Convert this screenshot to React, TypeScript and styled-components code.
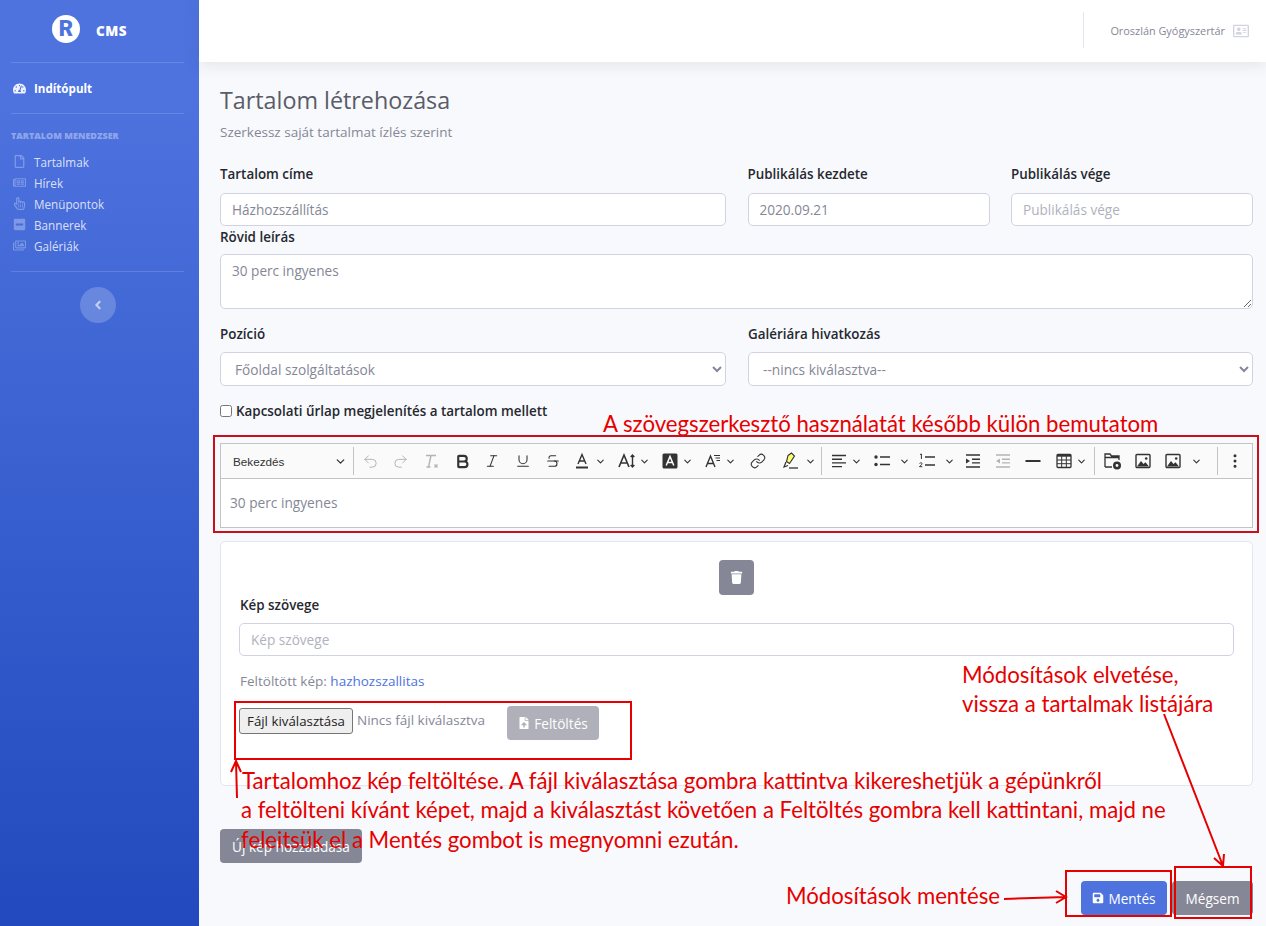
import styled, { createGlobalStyle } from "styled-components";
import type { ReactNode } from "react";
import {
  FaTachometerAlt, FaRegFile, FaRegNewspaper, FaRegHandPointer, FaMinusSquare, FaRegImages,
  FaAngleLeft, FaRegAddressCard, FaTrash, FaFileUpload, FaSave,
} from "react-icons/fa";
import {
  Undo2, Redo2, Bold, Italic, Underline, Strikethrough, Link, ChevronDown,
  MoreVertical,
} from "lucide-react";

const GlobalStyle = createGlobalStyle`
  html, body { margin: 0; padding: 0; height: 100%; overflow: hidden; }
  body { font-family: "Open Sans", "Noto Sans", sans-serif; color: #858796; background: #f8f9fc; }
  * { box-sizing: border-box; }
`;

const NAV = [
  { label: "Tartalmak", icon: <FaRegFile /> },
  { label: "Hírek", icon: <FaRegNewspaper /> },
  { label: "Menüpontok", icon: <FaRegHandPointer /> },
  { label: "Bannerek", icon: <FaMinusSquare /> },
  { label: "Galériák", icon: <FaRegImages /> },
];

const Svg = ({ children, faded }: { children: ReactNode; faded?: boolean }) => (
  <svg width="18" height="18" viewBox="0 0 18 18" fill="none" stroke={faded ? "#b4b4b4" : "#333"} strokeWidth="1.4">
    {children}
  </svg>
);

const ClearIcon = () => (
  <Svg faded>
    <path d="M4 3.5h10M9 3.5 6.5 15M4.5 15h4M12.5 12.5l3 3M15.5 12.5l-3 3" />
  </Svg>
);
const FontColorIcon = () => (
  <Svg>
    <path d="M5 12 9 2.5 13 12M6.4 9h5.2" />
    <path d="M3 15.5h12" strokeWidth="2" />
  </Svg>
);
const FontSizeIcon = () => (
  <Svg>
    <path d="M1 15 6 3l5 12M2.8 11h6.4" strokeWidth="1.6" />
    <path d="M14.5 3v12M12.7 5l1.8-2 1.8 2M12.7 13l1.8 2 1.8-2" />
  </Svg>
);
const BgColorIcon = () => (
  <svg width="18" height="18" viewBox="0 0 18 18">
    <rect x="1.5" y="1.5" width="15" height="15" rx="1.5" fill="#333" />
    <path d="M5.2 13.5 9 4.5l3.8 9M6.5 10.5h5" fill="none" stroke="#fff" strokeWidth="1.5" />
  </svg>
);
const FontFamilyIcon = () => (
  <Svg>
    <path d="M2 15 6.5 4 11 15M3.6 11.5h5.8" />
    <path d="M10 3.5h6M11.5 6h4.5M12.5 8.5h3.5" strokeWidth="1" />
  </Svg>
);
const MarkerIcon = () => (
  <svg width="20" height="18" viewBox="0 0 20 18">
    <path d="M8 3.5 11.5 1l3 3-5 7.5-3-2z" fill="#fdfd77" stroke="#333" strokeWidth="1.1" />
    <path d="M6 10 4 15l4-1.5" fill="none" stroke="#333" strokeWidth="1.2" />
    <path d="M9 16h9" stroke="#333" strokeWidth="1.3" />
  </svg>
);
const AlignIcon = () => (
  <Svg>
    <path d="M2 3.5h14M2 7.2h10M2 10.9h14M2 14.6h10" />
  </Svg>
);
const BulletIcon = () => (
  <svg width="18" height="18" viewBox="0 0 18 18">
    <circle cx="3" cy="5" r="1.7" fill="#333" />
    <circle cx="3" cy="12.5" r="1.7" fill="#333" />
    <path d="M7 5h10M7 12.5h10" stroke="#333" strokeWidth="1.5" />
  </svg>
);
const NumberedIcon = () => (
  <svg width="18" height="18" viewBox="0 0 18 18">
    <path d="M2 2.5 3.4 2v5M1.5 11.5c.6-1 2.8-.9 2.6.4-.1.8-2.3 2-2.6 2.8h2.8" fill="none" stroke="#333" strokeWidth="1" />
    <path d="M7 5h10M7 13h10" stroke="#333" strokeWidth="1.5" />
  </svg>
);
const IndentIcon = ({ faded, out }: { faded?: boolean; out?: boolean }) => (
  <svg width="18" height="18" viewBox="0 0 18 18">
    <path d="M2 3h14M8 7.2h8M8 10.9h8M2 15h14" stroke={faded ? "#b4b4b4" : "#333"} strokeWidth="1.4" />
    <path d={out ? "M6 6.5v5L2 9z" : "M2 6.5v5L6 9z"} fill={faded ? "#b4b4b4" : "#333"} />
  </svg>
);
const RuleIcon = () => (
  <svg width="18" height="18" viewBox="0 0 18 18">
    <path d="M1.5 9h15" stroke="#333" strokeWidth="2" />
  </svg>
);
const TableIcon = () => (
  <svg width="18" height="18" viewBox="0 0 18 18">
    <rect x="2" y="2.5" width="14" height="13" rx="1" fill="none" stroke="#333" strokeWidth="1.3" />
    <path d="M2 3.5h14" stroke="#333" strokeWidth="2.4" />
    <path d="M2 8h14M2 11.7h14M6.7 4v11M11.3 4v11" stroke="#333" strokeWidth="1" />
  </svg>
);
const FolderIcon = () => (
  <svg width="20" height="20" viewBox="0 0 20 20">
    <path d="M2 16V3h5l1.5 2H16v4M2 6.5h14M2 16h7" fill="none" stroke="#333" strokeWidth="1.3" />
    <circle cx="14" cy="14.5" r="4" fill="#333" />
    <circle cx="14" cy="14.5" r="1.4" fill="#fafafa" />
  </svg>
);
const PictureIcon = () => (
  <svg width="18" height="18" viewBox="0 0 18 18">
    <rect x="2" y="2.5" width="14" height="13" rx="1" fill="none" stroke="#333" strokeWidth="1.4" />
    <path d="M3 14.5 7 9l2.5 3 2-1.8 3.5 4.3z" fill="#333" />
    <circle cx="12.2" cy="6.5" r="1.3" fill="#333" />
  </svg>
);

// toolbar layout follows the order of the editor buttons; w is the full button width
const TOOLS: { icon?: ReactNode; w?: number; caret?: boolean; gap?: number; sep?: boolean; faded?: boolean }[] = [
  { sep: true },
  { icon: <Undo2 size={17} strokeWidth={1.4} />, w: 30, faded: true },
  { icon: <Redo2 size={17} strokeWidth={1.4} />, w: 30, faded: true },
  { icon: <ClearIcon />, w: 32 },
  { icon: <Bold size={17} strokeWidth={3} />, w: 30 },
  { icon: <Italic size={16} strokeWidth={1.6} />, w: 31 },
  { icon: <Underline size={16} strokeWidth={1.6} />, w: 30 },
  { icon: <Strikethrough size={16} strokeWidth={1.6} />, w: 28 },
  { icon: <FontColorIcon />, w: 45, caret: true, gap: 4 },
  { icon: <FontSizeIcon />, w: 43, caret: true },
  { icon: <BgColorIcon />, w: 43, caret: true },
  { icon: <FontFamilyIcon />, w: 46, caret: true },
  { icon: <Link size={16} strokeWidth={1.6} />, w: 30 },
  { icon: <MarkerIcon />, w: 46, caret: true, gap: 5 },
  { sep: true },
  { icon: <AlignIcon />, w: 43, caret: true },
  { icon: <BulletIcon />, w: 45, caret: true, gap: 8 },
  { icon: <NumberedIcon />, w: 46, caret: true, gap: 8 },
  { icon: <IndentIcon />, w: 30 },
  { icon: <IndentIcon faded out />, w: 30 },
  { icon: <RuleIcon />, w: 31 },
  { icon: <TableIcon />, w: 44, caret: true },
  { sep: true },
  { icon: <FolderIcon />, w: 31 },
  { icon: <PictureIcon />, w: 30 },
  { icon: <PictureIcon />, w: 58, caret: true, gap: 9 },
  { sep: true },
  { icon: <MoreVertical size={18} strokeWidth={2} />, w: 30 },
];

export default function App() {
  return (
    <>
      <GlobalStyle />
      <Shell>
        <Sidebar>
          <Brand>
            <BrandMark>R</BrandMark>
            <BrandName>CMS</BrandName>
          </Brand>
          <SideDivider />
          <NavActive>
            <FaTachometerAlt />
            Indítópult
          </NavActive>
          <SideDivider />
          <SideHeading>Tartalom menedzser</SideHeading>
          <NavList>
            {NAV.map((n) => (
              <NavItem key={n.label}>
                <NavIcon>{n.icon}</NavIcon>
                {n.label}
              </NavItem>
            ))}
          </NavList>
          <SideDivider />
          <Toggle>
            <FaAngleLeft />
          </Toggle>
        </Sidebar>

        <Main>
          <Topbar>
            <TopDivider />
            <UserName>Oroszlán Gyógyszertár</UserName>
            <FaRegAddressCard size={16} color="#d1d3e2" />
          </Topbar>

          <Content>
            <Title>Tartalom létrehozása</Title>
            <Subtitle>Szerkessz saját tartalmat ízlés szerint</Subtitle>

            <TopRow>
              <Field>
                <Label>Tartalom címe</Label>
                <Input defaultValue="Házhozszállítás" />
              </Field>
              <Field>
                <Label>Publikálás kezdete</Label>
                <Input defaultValue="2020.09.21" />
              </Field>
              <Field>
                <Label>Publikálás vége</Label>
                <Input placeholder="Publikálás vége" />
              </Field>
            </TopRow>

            <ShortLabel>Rövid leírás</ShortLabel>
            <TextArea defaultValue="30 perc ingyenes" />

            <SelectRow>
              <Field>
                <Label>Pozíció</Label>
                <Select defaultValue="a">
                  <option value="a">Főoldal szolgáltatások</option>
                </Select>
              </Field>
              <Field>
                <Label>Galériára hivatkozás</Label>
                <Select defaultValue="b">
                  <option value="b">--nincs kiválasztva--</option>
                </Select>
              </Field>
            </SelectRow>

            <CheckRow>
              <Check type="checkbox" />
              Kapcsolati űrlap megjelenítés a tartalom mellett
            </CheckRow>

            <Editor>
              <Toolbar>
                <HeadingDrop>
                  Bekezdés
                  <ChevronDown size={13} strokeWidth={2.4} />
                </HeadingDrop>
                {TOOLS.map((t, i) =>
                  t.sep ? (
                    <ToolSep key={i} />
                  ) : (
                    <Tool key={i} $w={t.w ?? 30} $gap={t.gap ?? 3} $faded={t.faded}>
                      {t.icon}
                      {t.caret && <ChevronDown size={11} strokeWidth={2.4} />}
                    </Tool>
                  )
                )}
              </Toolbar>
              <EditorBody>30 perc ingyenes</EditorBody>
            </Editor>

            <Card>
              <TrashButton>
                <FaTrash size={13} />
              </TrashButton>
              <CardLabel>Kép szövege</CardLabel>
              <Input placeholder="Kép szövege" />
              <Uploaded>
                Feltöltött kép: <UploadedLink>hazhozszallitas</UploadedLink>
              </Uploaded>
              <UploadRow>
                <FileButton>Fájl kiválasztása</FileButton>
                <FileHint>Nincs fájl kiválasztva</FileHint>
                <UploadButton>
                  <FaFileUpload size={12} />
                  Feltöltés
                </UploadButton>
              </UploadRow>
            </Card>

            <AddButton>Új kép hozzáadása</AddButton>

            <Actions>
              <SaveButton>
                <FaSave size={12} />
                Mentés
              </SaveButton>
              <CancelButton>Mégsem</CancelButton>
            </Actions>
          </Content>
        </Main>
      </Shell>

      {/* red callouts drawn over the page */}
      <Note $x={603} $y={409}>A szövegszerkesztő használatát később külön bemutatom</Note>
      <Note $x={962} $y={660}>Módosítások elvetése,</Note>
      <Note $x={962} $y={689}>vissza a tartalmak listájára</Note>
      <Note $x={242} $y={766}>Tartalomhoz kép feltöltése. A fájl kiválasztása gombra kattintva kikereshetjük a gépünkről</Note>
      <Note $x={241} $y={795}>a feltölteni kívánt képet, majd a kiválasztást követően a Feltöltés gombra kell kattintani, majd ne</Note>
      <Note $x={241} $y={825}>feleitsük el a Mentés gombot is megnyomni ezután.</Note>
      <Note $x={786} $y={881}>Módosítások mentése</Note>
      <RedBox $x={213} $y={435} $w={1046} $h={98} $c="#c8101c" />
      <RedBox $x={234} $y={701} $w={398} $h={59} />
      <RedBox $x={1065} $y={870} $w={107} $h={47} />
      <RedBox $x={1174} $y={866} $w={78} $h={53} />
      <Arrows width="1266" height="926" viewBox="0 0 1266 926" fill="none" stroke="#e60000" strokeWidth="2">
        <path d="M237 798 236 761M231 772l5-11 5 11" />
        <path d="M1164 714 1223 866M1214 858l9 8 1-12" />
        <path d="M1004 899 1066 897M1056 891l10 6-10 6" />
      </Arrows>
    </>
  );
}

const Shell = styled.div`
  display: flex;
  height: 926px;
  overflow: hidden;
`;

const Sidebar = styled.aside`
  width: 199px;
  flex-shrink: 0;
  padding: 0 15px 0 11px;
  display: flex;
  flex-direction: column;
  background: linear-gradient(180deg, #4e73df 10%, #224abe 100%);
`;

const Brand = styled.div`
  height: 62px;
  display: flex;
  align-items: center;
  padding-left: 41px;
  gap: 16px;
`;

const BrandMark = styled.div`
  width: 28px;
  height: 28px;
  margin-top: -4px;
  border-radius: 50%;
  background: #fff;
  color: #4e73df;
  font: 900 22px/28px Roboto, sans-serif;
  text-align: center;
`;

const BrandName = styled.div`
  margin-top: -1px;
  color: #fff;
  font-size: 13.5px;
  font-weight: 800;
  letter-spacing: 0.5px;
`;

const SideDivider = styled.div`
  height: 1px;
  flex-shrink: 0;
  background: rgba(255, 255, 255, 0.15);
`;

const NavActive = styled.div`
  height: 50px;
  display: flex;
  align-items: center;
  gap: 8px;
  padding-left: 2px;
  color: #fff;
  font-size: 11.6px;
  font-weight: 700;

  svg {
    font-size: 13px;
    color: rgba(255, 255, 255, 0.9);
  }
`;

const SideHeading = styled.div`
  margin-top: 16px;
  color: rgba(255, 255, 255, 0.4);
  font-size: 9px;
  font-weight: 800;
  line-height: 12px;
  text-transform: uppercase;
`;

const NavList = styled.div`
  margin: 9px 0 15px;
  display: flex;
  flex-direction: column;
`;

const NavItem = styled.div`
  height: 21px;
  display: flex;
  align-items: center;
  color: rgba(255, 255, 255, 0.8);
  font-size: 11.7px;
`;

const NavIcon = styled.span`
  width: 23px;
  padding-left: 2px;
  display: flex;
  color: rgba(255, 255, 255, 0.3);
  font-size: 13px;
`;

const Toggle = styled.div`
  width: 36px;
  height: 36px;
  margin: 15px 0 0 69px;
  border-radius: 50%;
  display: flex;
  align-items: center;
  justify-content: center;
  background: rgba(255, 255, 255, 0.2);
  color: rgba(255, 255, 255, 0.6);
  font-size: 14px;
`;

const Main = styled.main`
  flex: 1;
  min-width: 0;
  display: flex;
  flex-direction: column;
`;

const Topbar = styled.header`
  height: 62px;
  flex-shrink: 0;
  display: flex;
  align-items: center;
  justify-content: flex-end;
  padding-right: 17px;
  background: #fff;
  box-shadow: 0 2px 16px rgba(58, 59, 69, 0.12);
`;

const TopDivider = styled.div`
  width: 1px;
  height: 36px;
  margin: -2px 26px 0 0;
  background: #e3e6f0;
`;

const UserName = styled.span`
  margin: -2px 8px 0 0;
  font-size: 10.9px;
  color: #858796;
`;

const Content = styled.div`
  padding: 23px 13px 0 21px;
`;

const Title = styled.h1`
  margin: 0;
  color: #5a5c69;
  font-size: 23.3px;
  font-weight: 400;
  line-height: 30px;
`;

const Subtitle = styled.p`
  margin: 8px 0 25px;
  font-size: 13.5px;
  line-height: 18px;
`;

const TopRow = styled.div`
  display: grid;
  grid-template-columns: 506px 242px 242px;
  column-gap: 21.5px;
`;

const SelectRow = styled.div`
  margin-top: 17px;
  display: grid;
  grid-template-columns: 506px 505px;
  column-gap: 22px;
`;

const Field = styled.div`
  display: flex;
  flex-direction: column;
`;

const Label = styled.label`
  margin-bottom: 10px;
  color: #26282f;
  font-size: 13.4px;
  font-weight: 600;
  line-height: 17px;
`;

const ShortLabel = styled(Label)`
  display: block;
  margin: 3px 0 8px;
`;

const Input = styled.input`
  width: 100%;
  height: 33px;
  padding: 0 11px;
  border: 1px solid #d1d3e2;
  border-radius: 5px;
  background: #fff;
  color: #858796;
  font: 400 13.6px "Open Sans", sans-serif;
  outline: none;

  &::placeholder {
    color: #b0b2bd;
  }
`;

const TextArea = styled.textarea`
  display: block;
  width: 100%;
  height: 55px;
  padding: 6px 11px;
  border: 1px solid #d1d3e2;
  border-radius: 5px;
  color: #858796;
  font: 400 13.6px "Open Sans", sans-serif;
  outline: none;
`;

const Select = styled.select`
  width: 100%;
  height: 34px;
  margin-top: -1px;
  padding: 0 10px;
  border: 1px solid #d1d3e2;
  border-radius: 5px;
  background: #fff;
  color: #858796;
  font: 400 13.7px "Open Sans", sans-serif;
  outline: none;
`;

const CheckRow = styled.label`
  margin-top: 16px;
  display: flex;
  align-items: center;
  gap: 4px;
  height: 18px;
  color: #26282f;
  font-size: 13.4px;
  font-weight: 600;
`;

const Check = styled.input`
  width: 12px;
  height: 12px;
  margin: 0;
`;

const Editor = styled.div`
  margin-top: 23px;
  border: 1px solid #c4c4c4;
`;

const Toolbar = styled.div`
  height: 35px;
  display: flex;
  align-items: center;
  background: #fafafa;
  border-bottom: 1px solid #c4c4c4;
  color: #333;
`;

const HeadingDrop = styled.div`
  width: 131px;
  padding: 0 5px 0 12px;
  display: flex;
  align-items: center;
  justify-content: space-between;
  color: #333;
  font: 400 11.7px "Liberation Sans", Arial, sans-serif;
`;

const ToolSep = styled.span`
  width: 1px;
  height: 28px;
  margin: 0 2px 0 1px;
  flex-shrink: 0;
  background: #c4c4c4;
`;

const Tool = styled.span<{ $w: number; $gap: number; $faded?: boolean }>`
  width: ${(p) => p.$w}px;
  flex-shrink: 0;
  display: flex;
  align-items: center;
  padding-left: 6px;
  gap: ${(p) => p.$gap}px;
  color: ${(p) => (p.$faded ? "#b4b4b4" : "#333")};
`;

const EditorBody = styled.div`
  height: 48px;
  padding: 15px 9px;
  background: #fff;
  color: #858796;
  font-size: 13.7px;
  line-height: 18px;
`;

const Card = styled.section`
  margin-top: 13px;
  height: 245px;
  padding: 18px;
  border: 1px solid #e3e6f0;
  border-radius: 5px;
  background: #fff;
`;

const TrashButton = styled.div`
  width: 35px;
  height: 35px;
  margin: 0 auto;
  border-radius: 4px;
  display: flex;
  align-items: center;
  justify-content: center;
  background: #858796;
  color: #fff;
`;

const CardLabel = styled(Label)`
  display: block;
  margin: 2px 0 9px 1px;
  padding-top: 0;
`;

const Uploaded = styled.div`
  margin: 16px 0 0 1px;
  font-size: 13.5px;
  line-height: 18px;
`;

const UploadedLink = styled.span`
  color: #4e73df;
`;

const UploadRow = styled.div`
  margin-top: 16px;
  display: flex;
  align-items: flex-start;
`;

const FileButton = styled.div`
  width: 114px;
  height: 26px;
  margin-top: 2px;
  border: 1px solid #767676;
  border-radius: 3px;
  background: #efefef;
  color: #222;
  font-size: 13.3px;
  line-height: 24px;
  text-align: center;
`;

const FileHint = styled.span`
  width: 154px;
  margin-top: 2px;
  padding-left: 4px;
  font-size: 13.5px;
  line-height: 24px;
`;

const Btn = styled.div`
  height: 34px;
  border-radius: 4px;
  display: flex;
  align-items: center;
  justify-content: center;
  gap: 4px;
  color: #fff;
  font-size: 13.6px;
`;

const UploadButton = styled(Btn)`
  width: 92px;
  background: #858796;
  opacity: 0.65;
`;

const AddButton = styled(Btn)`
  width: 142px;
  margin-top: 43px;
  background: #858796;
`;

const Actions = styled.div`
  margin-top: 18px;
  display: flex;
  justify-content: flex-end;
  gap: 5px;
`;

const SaveButton = styled(Btn)`
  width: 86px;
  background: #4e73df;
`;

const CancelButton = styled(Btn)`
  width: 81px;
  background: #858796;
`;

const Note = styled.div<{ $x: number; $y: number }>`
  position: absolute;
  left: ${(p) => p.$x}px;
  top: ${(p) => p.$y}px;
  color: #e60000;
  font: 400 22.2px/29px Lato, sans-serif;
  white-space: nowrap;
`;

const RedBox = styled.div<{ $x: number; $y: number; $w: number; $h: number; $c?: string }>`
  position: absolute;
  left: ${(p) => p.$x}px;
  top: ${(p) => p.$y}px;
  width: ${(p) => p.$w}px;
  height: ${(p) => p.$h}px;
  border: 2px solid ${(p) => p.$c ?? "#e60000"};
`;

const Arrows = styled.svg`
  position: absolute;
  left: 0;
  top: 0;
  pointer-events: none;
`;
